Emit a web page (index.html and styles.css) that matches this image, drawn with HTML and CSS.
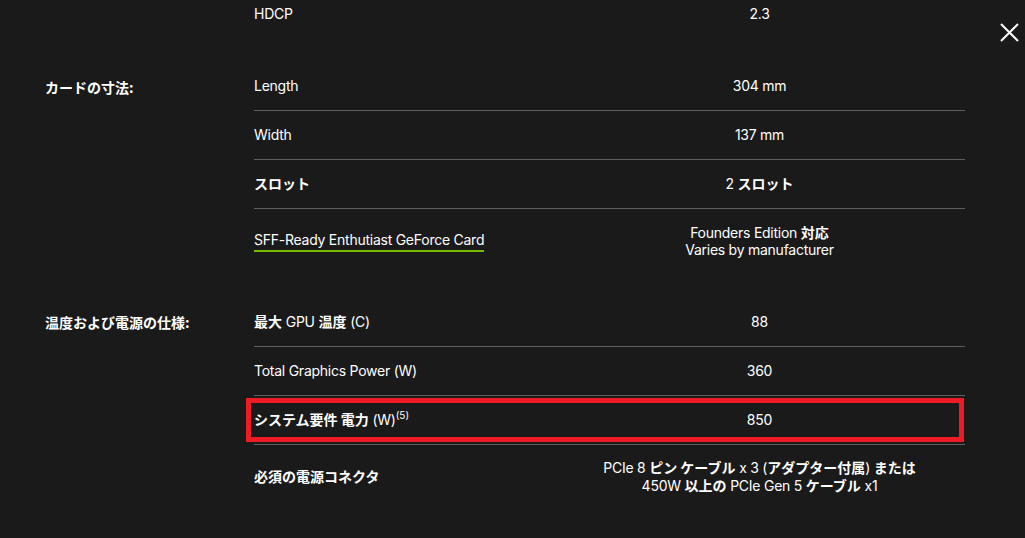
FILE: index.html
```html
<!DOCTYPE html>
<html lang="ja">
<head>
<meta charset="utf-8">
<title>Specs</title>
<link rel="stylesheet" href="styles.css">
</head>
<body>
<div class="sheet">
  <section class="group group-first">
    <div class="group-title"></div>
    <div class="rows">
      <div class="row">
        <div class="key">HDCP</div>
        <div class="val">2.3</div>
      </div>
    </div>
  </section>

  <section class="group">
    <div class="group-title ja">カードの寸法:</div>
    <div class="rows">
      <div class="row">
        <div class="key">Length</div>
        <div class="val">304 mm</div>
      </div>
      <div class="row">
        <div class="key">Width</div>
        <div class="val">137 mm</div>
      </div>
      <div class="row">
        <div class="key"><span class="ja">スロット</span></div>
        <div class="val">2 <span class="ja">スロット</span></div>
      </div>
      <div class="row">
        <div class="key"><a class="link">SFF-Ready Enthutiast GeForce Card</a></div>
        <div class="val multi tight">Founders Edition <span class="ja">対応</span><br>Varies by manufacturer</div>
      </div>
    </div>
  </section>

  <section class="group">
    <div class="group-title ja">温度および電源の仕様:</div>
    <div class="rows">
      <div class="row">
        <div class="key"><span class="ja">最大</span> GPU <span class="ja">温度</span> (C)</div>
        <div class="val">88</div>
      </div>
      <div class="row">
        <div class="key">Total Graphics Power (W)</div>
        <div class="val">360</div>
      </div>
      <div class="row row-marked">
        <div class="key"><span class="ja">システム要件 電力</span> (W)<sup class="note">(5)</sup></div>
        <div class="val">850</div>
        <div class="mark"></div>
      </div>
      <div class="row">
        <div class="key"><span class="ja">必須の電源コネクタ</span></div>
        <div class="val multi">PCIe 8 <span class="ja">ピン ケーブル</span> x 3 (<span class="ja">アダプター付属</span>) <span class="ja">または</span><br>450W <span class="ja">以上の</span> PCIe Gen 5 <span class="ja">ケーブル</span> x1</div>
      </div>
    </div>
  </section>
</div>

<button class="close" aria-label="close">
  <svg width="19" height="19" viewBox="0 0 19 19"><path d="M1 1 L18 18 M18 1 L1 18" stroke="#fff" stroke-width="2" fill="none"/></svg>
</button>
</body>
</html>
```

FILE: styles.css
```css
html, body {
  margin: 0;
  padding: 0;
  background: #1a1a1a;
  overflow: hidden;
}

body {
  color: #fff;
  font-family: "Inter", "Noto Sans CJK JP", sans-serif;
  font-size: 14px;
  line-height: 20px;
  letter-spacing: -0.25px;
  width: 1025px;
  height: 538px;
  position: relative;
}

.sheet {
  padding-left: 45px;
  margin-top: -10px;
  display: flex;
  flex-direction: column;
  gap: 25px;
}

.group {
  display: flex;
  align-items: flex-start;
}

.group-title {
  width: 209px;
  flex: none;
  padding-top: 14px;
  font-weight: 700;
}

.ja {
  font-family: "Noto Sans CJK JP", sans-serif;
  font-weight: 700;
  letter-spacing: 0;
}

.rows {
  width: 711px;
  display: flex;
  flex-direction: column;
}

.row {
  position: relative;
  display: flex;
  align-items: center;
  padding: 13.75px 0;
  border-bottom: 1px solid #5f5f5f;
}

.row:last-child {
  border-bottom: none;
}

.key {
  width: 300px;
  flex: none;
}

.val {
  flex: 1;
  text-align: center;
}

.val.multi {
  line-height: 18px;
}

.val.multi .ja {
  line-height: 1;
}

.val.multi.tight {
  line-height: 17px;
  padding: 1px 0;
}

.link {
  display: inline-block;
  line-height: 17px;
  padding-bottom: 2px;
  border-bottom: 2px solid #76b900;
  color: #fff;
  text-decoration: none;
}

.note {
  font-size: 10px;
  line-height: 0;
  vertical-align: 6px;
  letter-spacing: 0;
}

.mark {
  position: absolute;
  left: -8px;
  right: 1px;
  top: 2px;
  bottom: 2px;
  border: 5px solid #ed1c24;
}

.close {
  position: absolute;
  left: 1000px;
  top: 23px;
  width: 19px;
  height: 19px;
  padding: 0;
  border: none;
  background: none;
  cursor: pointer;
}

.close svg {
  display: block;
}
```
